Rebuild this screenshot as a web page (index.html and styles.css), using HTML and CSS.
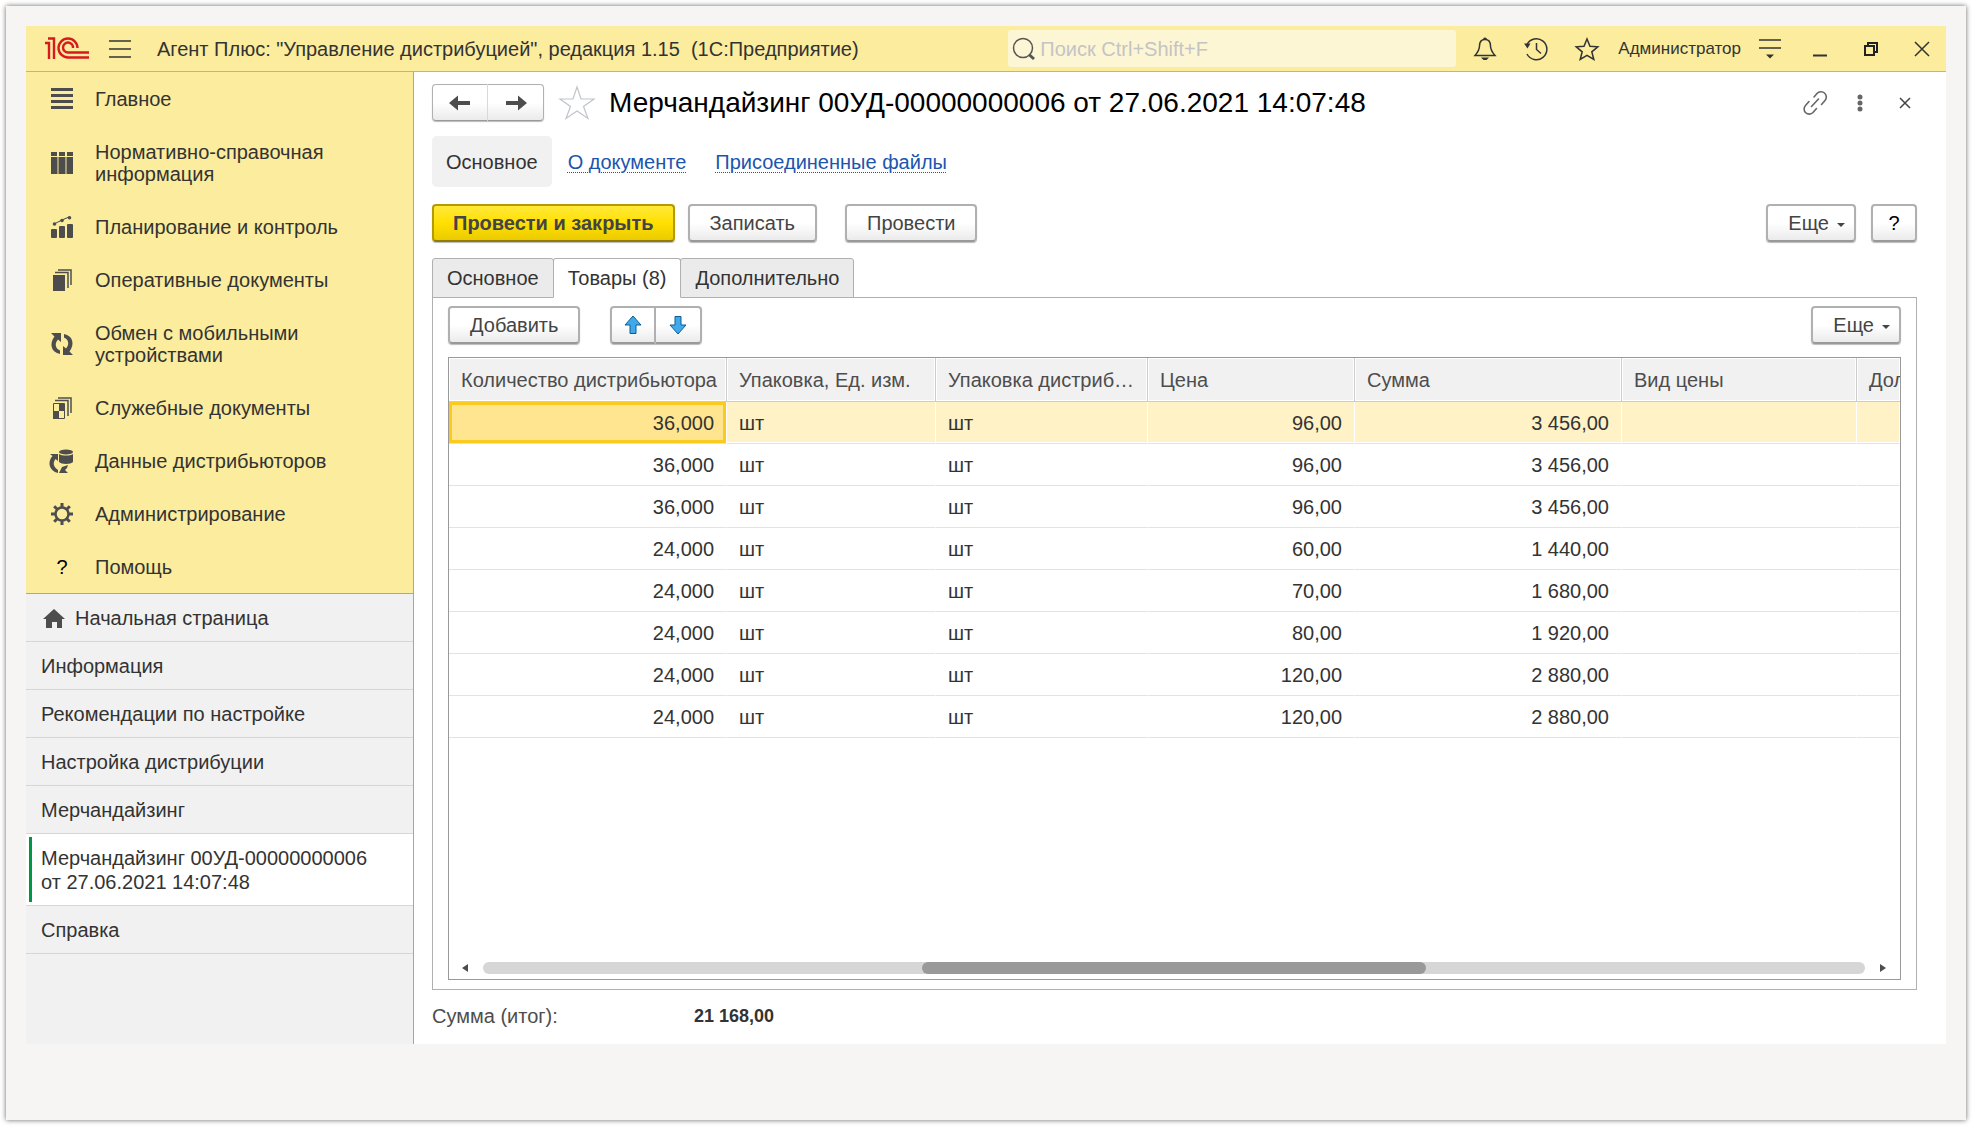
FILE: index.html
```html
<!DOCTYPE html>
<html lang="ru">
<head>
<meta charset="UTF-8">
<meta name="viewport" content="width=device-width, initial-scale=1.0">
<title>Мерчандайзинг 00УД-00000000006</title>
<link rel="stylesheet" href="styles.css">
</head>
<body>
<div class="frame">
  <div class="app">
    <header class="topbar">
      <svg class="logo" width="44" height="23" viewBox="0 0 44 23" fill="none" stroke="#d8191f" stroke-width="2.400">
        <path d="M0 6h4V22M3 1.500h6V22"/>
        <path d="M32.500 11a9.500 9.500 0 1 0-9.500 9.500H44"/>
        <path d="M28 11a5 5 0 1 0-5 4.500H44"/>
      </svg>
      <button class="icon-btn menu-btn" aria-label="Меню">
        <svg width="22" height="18" viewBox="0 0 22 18" stroke="#333" stroke-width="1.500"><path d="M0 1h22M0 9h22M0 17h22"/></svg>
      </button>
      <span class="app-title">Агент Плюс: "Управление дистрибуцией", редакция 1.15&nbsp; (1С:Предприятие)</span>
      <label class="search">
        <svg width="24" height="24" viewBox="0 0 24 24" fill="none" stroke="#555"><circle cx="11" cy="11" r="9.500" stroke-width="1.500"/><path d="M17 17.500l5 4.500" stroke-width="3"/></svg>
        <input type="text" placeholder="Поиск Ctrl+Shift+F" aria-label="Поиск">
      </label>
      <div class="top-icons">
        <button class="icon-btn bell" aria-label="Оповещения">
          <svg width="24" height="24" viewBox="0 0 24 24" fill="none" stroke="#333" stroke-width="1.500"><path d="M12 2.500c-4 0-5.500 3-5.500 6.500 0 4-1.500 6-4.500 9.500h20c-3-3.500-4.500-5.500-4.500-9.500 0-3.500-1.500-6.500-5.500-6.500z"/><path d="M10 2.500a2 2 0 0 1 4 0zM8 20.500h8l-2.500 2.500h-3z" fill="#333" stroke="none"/></svg>
        </button>
        <button class="icon-btn history" aria-label="История">
          <svg width="24" height="24" viewBox="0 0 24 24" fill="none" stroke="#333" stroke-width="1.500"><path d="M3 7.500A10.500 10.500 0 1 1 3 17M12.500 6v6.500l4.500 4"/><path d="M0 6.500h6.500l-3 5z" fill="#333" stroke="none"/></svg>
        </button>
        <button class="icon-btn fav" aria-label="Избранное">
          <svg width="24" height="24" viewBox="0 0 24 24" fill="none" stroke="#333" stroke-width="1.500"><path d="M12 2l3 7.200 7.800.600-6 5 2 7.700-6.800-4.200-6.800 4.200 2-7.700-6-5 7.800-.600z"/></svg>
        </button>
        <a class="user" href="#">Администратор</a>
        <button class="icon-btn service" aria-label="Сервис">
          <svg width="22" height="22" viewBox="0 0 22 22" stroke="#333" stroke-width="1.500"><path d="M0 2h22M0 10h22"/><path d="M7 16.500h8l-4 4z" fill="#333" stroke="none"/></svg>
        </button>
        <button class="icon-btn win" aria-label="Свернуть">
          <svg width="14" height="16" viewBox="0 0 14 16"><path d="M0 14.500h14" stroke="#333" stroke-width="2"/></svg>
        </button>
        <button class="icon-btn win" aria-label="Развернуть">
          <svg width="14" height="14" viewBox="0 0 14 14" fill="none" stroke="#222" stroke-width="2"><path d="M1 4h9v9H1zM4 4V1h9v9h-3"/></svg>
        </button>
        <button class="icon-btn win" aria-label="Закрыть">
          <svg width="16" height="16" viewBox="0 0 16 16" stroke="#333" stroke-width="1.500"><path d="M1 1l14 14M15 1L1 15"/></svg>
        </button>
      </div>
    </header>

    <div class="workspace">
      <aside class="sidebar">
        <nav class="sections">
          <a href="#">
            <svg width="22" height="22" viewBox="0 0 22 22" fill="#4d4d4d"><path d="M0 0h22v3H0zM0 6h22v3H0zM0 12h22v3H0zM0 18h22v3H0z"/></svg>
            <span>Главное</span>
          </a>
          <a href="#">
            <svg width="22" height="22" viewBox="0 0 22 22" fill="#4d4d4d"><path d="M0 0h6v4H0zM8 0h6v4H8zM16 0h6v4h-6zM0 5h6.500v17H0zM7.500 5h7v17h-7zM15.500 5H22v17h-6.500z"/></svg>
            <span>Нормативно-справочная информация</span>
          </a>
          <a href="#">
            <svg width="22" height="22" viewBox="0 0 22 22" fill="#4d4d4d"><rect y="13" width="6" height="9" rx="1"/><rect x="8" y="10" width="6" height="12" rx="1"/><rect x="16" y="8" width="6" height="14" rx="1"/><path d="M3 8l8-4 7-3" stroke="#4d4d4d"/><circle cx="3.500" cy="8" r="1.800"/><circle cx="11" cy="4.500" r="1.800"/><circle cx="18.500" cy="1.800" r="1.800"/></svg>
            <span>Планирование и контроль</span>
          </a>
          <a href="#">
            <svg width="22" height="22" viewBox="0 0 22 22" fill="#4d4d4d"><path d="M2 6h12v16H2z"/><path d="M4 3.500h13V19M7 1h13v15" fill="none" stroke="#4d4d4d" stroke-width="1.500"/></svg>
            <span>Оперативные документы</span>
          </a>
          <a href="#">
            <svg width="22" height="22" viewBox="0 0 22 22" fill="#4d4d4d"><path d="M0 0h10v9L7 6.500c-3.500 3.500-3 9 2 11V21C0 19.500-2 10.500 3.500 3.500zM22 22H12v-9l3 2.500c3.500-3.500 3-9-2-11V1c9 1.500 11 10.500 5.500 17.500z"/></svg>
            <span>Обмен с мобильными устройствами</span>
          </a>
          <a href="#">
            <svg width="22" height="22" viewBox="0 0 22 22" fill="#4d4d4d"><path d="M2.500 6.500h11v15h-11z" fill="none" stroke="#4d4d4d"/><path d="M8 7h6v7H8zM2 14h6v8H2z"/><path d="M4 3.500h13V19M7 1h13v15" fill="none" stroke="#4d4d4d" stroke-width="1.500"/></svg>
            <span>Служебные документы</span>
          </a>
          <a href="#">
            <svg width="22" height="22" viewBox="1 1 22 22" fill="#4d4d4d"><ellipse cx="16" cy="3" rx="7" ry="2.500"/><path d="M9 5c3 2 11 2 14 0v8c-2 2.500-12 2.500-14 0zM0 5h8v7L5.500 10c-3 4-2 8 2.500 11v3C-1 22 -3 13 2.500 7zM12 18l6-2-1 3-2 2 3 3h-9z"/></svg>
            <span>Данные дистрибьюторов</span>
          </a>
          <a href="#">
            <svg width="22" height="22" viewBox="0 0 22 22" fill="none" stroke="#4d4d4d"><circle cx="11" cy="11" r="6.500" stroke-width="2.500"/><path d="M11 0v4M11 18v4M0 11h4M18 11h4M3.200 3.200L6 6M16 16l2.800 2.800M18.800 3.200L16 6M6 16l-2.800 2.800" stroke-width="3"/></svg>
            <span>Администрирование</span>
          </a>
          <a href="#">
            <i class="help-mark">?</i>
            <span>Помощь</span>
          </a>
        </nav>
        <nav class="windows">
          <a href="#" class="home">
            <svg width="22" height="19" viewBox="0 0 22 19" fill="#4d4d4d"><path d="M11 0l11 10h-3v9h-5v-6H9v6H3v-9H0z"/></svg>
            Начальная страница
          </a>
          <a href="#">Информация</a>
          <a href="#">Рекомендации по настройке</a>
          <a href="#">Настройка дистрибуции</a>
          <a href="#">Мерчандайзинг</a>
          <a href="#" class="current">Мерчандайзинг 00УД-00000000006 от 27.06.2021 14:07:48</a>
          <a href="#">Справка</a>
        </nav>
      </aside>

      <main class="document">
        <div class="doc-head">
          <div class="btn-group history-nav">
            <button class="btn" aria-label="Назад">
              <svg width="22" height="16" viewBox="0 0 22 16" fill="#4d4d4d"><path d="M0 8l9-7.500V6h12v4H9v5.500z"/></svg>
            </button>
            <button class="btn" aria-label="Вперед">
              <svg width="22" height="16" viewBox="0 0 22 16" fill="#4d4d4d"><path d="M22 8l-9-7.500V6H1v4h12v5.500z"/></svg>
            </button>
          </div>
          <button class="icon-btn doc-star" aria-label="В избранное">
            <svg width="36" height="34" viewBox="0 0 36 34" fill="none" stroke="#c0c4ca" stroke-width="1.200"><path d="M18 1l4 12h13l-10.500 7.500L29 32.500 18 25 7 32.500l4.500-12L1 13h13z"/></svg>
          </button>
          <h1>Мерчандайзинг 00УД-00000000006 от 27.06.2021 14:07:48</h1>
          <div class="doc-tools">
            <button class="icon-btn" aria-label="Получить ссылку">
              <svg width="24" height="24" viewBox="0 0 24 24" fill="none" stroke="#666" stroke-width="1.600" stroke-linecap="round"><path d="M11 6l3-3.500a5 5 0 0 1 8 7l-3.500 4M6 10.500l-3.500 4a5 5 0 0 0 7.500 7l3.500-4M8.500 15.500l7-7.500"/></svg>
            </button>
            <button class="icon-btn" aria-label="Действия">
              <svg width="24" height="24" viewBox="0 0 24 24" fill="#666"><circle cx="12" cy="6" r="2.500"/><circle cx="12" cy="12" r="2.500"/><circle cx="12" cy="18" r="2.500"/></svg>
            </button>
            <button class="icon-btn" aria-label="Закрыть документ">
              <svg width="24" height="24" viewBox="0 0 24 24" stroke="#444" stroke-width="1.500"><path d="M7 7l10 10M17 7L7 17"/></svg>
            </button>
          </div>
        </div>

        <nav class="doc-links">
          <span class="active">Основное</span>
          <a href="#">О документе</a>
          <a href="#">Присоединенные файлы</a>
        </nav>

        <div class="commands">
          <button class="btn primary">Провести и закрыть</button>
          <button class="btn">Записать</button>
          <button class="btn post">Провести</button>
          <button class="btn more">Еще <i class="caret"></i></button>
          <button class="btn help">?</button>
        </div>

        <div class="tabs">
          <button>Основное</button>
          <button class="active">Товары (8)</button>
          <button>Дополнительно</button>
        </div>

        <section class="panel">
          <div class="panel-bar">
            <button class="btn">Добавить</button>
            <div class="btn-group move">
              <button class="btn" aria-label="Переместить вверх">
                <svg width="18" height="20" viewBox="0 0 18 20" fill="#3fa9ec" stroke="#0d5e92"><path d="M9 1l8 9h-5v8.500H6V10H1z"/></svg>
              </button>
              <button class="btn" aria-label="Переместить вниз">
                <svg width="18" height="20" viewBox="0 0 18 20" fill="#3fa9ec" stroke="#0d5e92"><path d="M9 19l8-9h-5V1.500H6V10H1z"/></svg>
              </button>
            </div>
            <button class="btn more">Еще <i class="caret"></i></button>
          </div>

          <div class="grid">
            <table>
              <colgroup>
                <col class="c-qty"><col class="c-unit"><col class="c-dist"><col class="c-price"><col class="c-sum"><col class="c-kind"><col>
              </colgroup>
              <thead>
                <tr><th>Количество дистрибьютора</th><th>Упаковка, Ед. изм.</th><th>Упаковка дистриб…</th><th>Цена</th><th>Сумма</th><th>Вид цены</th><th class="cut">Дол</th></tr>
              </thead>
              <tbody>
                <tr class="selected"><td class="num focus">36,000</td><td>шт</td><td>шт</td><td class="num">96,00</td><td class="num">3 456,00</td><td></td><td></td></tr>
                <tr><td class="num">36,000</td><td>шт</td><td>шт</td><td class="num">96,00</td><td class="num">3 456,00</td><td></td><td></td></tr>
                <tr><td class="num">36,000</td><td>шт</td><td>шт</td><td class="num">96,00</td><td class="num">3 456,00</td><td></td><td></td></tr>
                <tr><td class="num">24,000</td><td>шт</td><td>шт</td><td class="num">60,00</td><td class="num">1 440,00</td><td></td><td></td></tr>
                <tr><td class="num">24,000</td><td>шт</td><td>шт</td><td class="num">70,00</td><td class="num">1 680,00</td><td></td><td></td></tr>
                <tr><td class="num">24,000</td><td>шт</td><td>шт</td><td class="num">80,00</td><td class="num">1 920,00</td><td></td><td></td></tr>
                <tr><td class="num">24,000</td><td>шт</td><td>шт</td><td class="num">120,00</td><td class="num">2 880,00</td><td></td><td></td></tr>
                <tr><td class="num">24,000</td><td>шт</td><td>шт</td><td class="num">120,00</td><td class="num">2 880,00</td><td></td><td></td></tr>
              </tbody>
            </table>
            <div class="scrollbar">
              <svg width="6" height="8" viewBox="0 0 6 8" fill="#4d4d4d"><path d="M6 0v8L0 4z"/></svg>
              <div class="track"><div class="thumb"></div></div>
              <svg width="6" height="8" viewBox="0 0 6 8" fill="#4d4d4d"><path d="M0 0v8l6-4z"/></svg>
            </div>
          </div>
        </section>

        <div class="total">
          <span class="total-label">Сумма (итог):</span>
          <span class="total-value">21 168,00</span>
        </div>
      </main>
    </div>
  </div>
</div>
</body>
</html>
```
FILE: styles.css
```css
* {
  box-sizing: border-box;
}
body {
  margin: 0;
  padding: 6px;
  min-height: 100vh;
  display: flex;
  background-color: #fff;
  font-family: "Liberation Sans", Arial, sans-serif;
  font-size: 20px;
  line-height: 24px;
  color: #333;
}
a {
  color: inherit;
  text-decoration: none;
}
button {
  font: inherit;
  color: inherit;
  cursor: pointer;
}
svg {
  display: block;
  flex: none;
  overflow: visible;
}

/* paper frame round the window */
.frame {
  flex: 1;
  min-width: 0;
  display: flex;
  padding: 20px 20px 76px;
  background-color: #f6f5f3;
  box-shadow: 0 0 5px rgba(0, 0, 0, 0.6);
}
.app {
  flex: 1;
  min-width: 0;
  display: flex;
  flex-direction: column;
  background-color: #fff;
}

/* Top bar */
.topbar {
  display: flex;
  align-items: center;
  height: 46px;
  padding: 0 12px 0 19px;
  background-color: #fbec9e;
  border-bottom: 1px solid #c8b95c;
}
.icon-btn {
  display: flex;
  align-items: center;
  justify-content: center;
  padding: 0;
  border: none;
  background: none;
}
.menu-btn {
  margin: 0 26px 0 20px;
}
.app-title {
  flex: 1;
  white-space: nowrap;
}
.search {
  display: flex;
  align-items: center;
  flex: 0 1 448px;
  min-width: 0;
  height: 37px;
  padding-left: 4px;
  border-radius: 3px;
  background-color: #fdf6d5;
}
.search input {
  flex: 1;
  min-width: 0;
  padding: 0 4px;
  border: none;
  outline: none;
  background: none;
  font: inherit;
}
.search input::placeholder {
  color: #c4c4c4;
  opacity: 1;
}
.top-icons {
  display: flex;
  align-items: center;
  gap: 27px;
  margin-left: 17px;
}
.user {
  margin: 0 -9px 0 -8px;
  font-size: 17px;
}
.win {
  width: 24px;
}

.workspace {
  flex: 1;
  display: flex;
}

/* Sidebar */
.sidebar {
  flex: none;
  width: 388px;
  border-right: 1px solid #b9ab5a;
  background-color: #f1f1f1;
}
.sections {
  background-color: #fbec9e;
  border-bottom: 1px solid #b9ab5a;
  line-height: 22px;
}
.sections a {
  display: grid;
  grid-template-columns: 22px 260px;
  align-items: center;
  justify-items: center;
  gap: 22px;
  padding: 16px 0 15px 25px;
}
.sections span {
  justify-self: start;
}
.help-mark {
  font-style: normal;
  color: #000;
}
.windows a {
  display: block;
  padding: 12px 40px 11px 15px;
  border-bottom: 1px solid #d6d6d6;
}
.windows .home {
  display: flex;
  align-items: center;
  gap: 10px;
  padding-left: 17px;
}
.windows .current {
  position: relative;
  background-color: #fff;
}
.windows .current::before {
  content: "";
  position: absolute;
  left: 3px;
  top: 3px;
  bottom: 3px;
  width: 3px;
  background-color: #009646;
}

/* Document */
.document {
  flex: 1;
  min-width: 0;
  display: flex;
  flex-direction: column;
  padding: 12px 29px 16px 18px;
}
.doc-head {
  display: flex;
  align-items: center;
}
h1 {
  flex: 1;
  margin: 0;
  font-size: 28px;
  font-weight: normal;
  line-height: 37px;
  color: #000;
}
.doc-star {
  margin: 0 14px 0 15px;
}
.doc-tools {
  display: flex;
  gap: 21px;
}
.doc-links {
  display: flex;
  align-items: center;
  margin: 15px 0 17px;
}
.doc-links .active {
  padding: 14px 14px 13px;
  border-radius: 5px;
  background-color: #f1f1f1;
}
.doc-links a {
  margin-left: 16px;
  color: #1c55ae;
  text-decoration: underline dotted 1px;
  text-underline-offset: 3px;
}
.doc-links a + a {
  margin-left: 29px;
}

/* Buttons */
.btn {
  display: flex;
  align-items: center;
  justify-content: center;
  height: 38px;
  padding: 0 20px;
  border: 2px solid #b0b0b0;
  border-bottom-color: #999;
  border-radius: 4px;
  background: linear-gradient(#fff 50%, #ebebeb);
  box-shadow: 0 1px 1px #bbb;
  color: #444;
  white-space: nowrap;
}
.btn.primary {
  padding: 0 19px;
  border-color: #b39b00;
  border-bottom-color: #8f7c00;
  background: linear-gradient(#ffe93a, #ffe000 50%, #ebcb00);
  font-weight: bold;
}
.btn-group {
  display: flex;
}
.btn-group .btn:first-child {
  border-top-right-radius: 0;
  border-bottom-right-radius: 0;
}
.btn-group .btn:last-child {
  border-left: none;
  border-top-left-radius: 0;
  border-bottom-left-radius: 0;
}
.history-nav .btn {
  width: 56px;
  height: 37px;
  padding: 0;
  border-width: 1px;
}
.history-nav .btn:first-child {
  border-right-color: #ddd;
}
.move .btn {
  width: 46px;
  padding: 0;
}
.more {
  margin-left: auto;
  padding: 0 9px 0 20px;
  gap: 8px;
}
.caret {
  margin-top: 3px;
  border: 4px solid transparent;
  border-top-color: #444;
  border-bottom: none;
}
.commands {
  display: flex;
}
.commands .primary {
  margin-right: 13px;
}
.commands .post {
  margin-left: 28px;
}
.commands .help {
  width: 46px;
  margin-left: 15px;
  padding: 0;
  color: #000;
}

/* Tabs */
.tabs {
  display: flex;
  margin-top: 16px;
}
.tabs button {
  height: 40px;
  margin: 0 0 -1px -1px;
  padding: 0 14px;
  border: 1px solid #b0b0b0;
  border-radius: 3px 3px 0 0;
  background-color: #ebebeb;
}
.tabs button:first-child {
  margin-left: 0;
}
.tabs .active {
  border-bottom-color: #fff;
  background-color: #fff;
  z-index: 1;
}
.panel {
  flex: 1;
  display: flex;
  flex-direction: column;
  padding: 8px 15px 9px;
  border: 1px solid #b0b0b0;
}
.panel-bar {
  display: flex;
  margin-bottom: 13px;
}
.move {
  margin-left: 30px;
}

/* Table of goods */
.grid {
  flex: 1;
  display: flex;
  flex-direction: column;
  justify-content: space-between;
  border: 1px solid #999;
  overflow: hidden;
}
table {
  width: 100%;
  table-layout: fixed;
  border-collapse: separate;
  border-spacing: 0;
}
.c-qty {
  width: 278px;
}
.c-unit {
  width: 209px;
}
.c-dist {
  width: 212px;
}
.c-price {
  width: 207px;
}
.c-sum {
  width: 267px;
}
.c-kind {
  width: 235px;
}
th,
td {
  padding: 0 12px;
  text-align: left;
  font-weight: normal;
  white-space: nowrap;
  overflow: hidden;
}
th {
  height: 44px;
  padding-right: 2px;
  color: #4d4d4d;
  background-color: #f1f1f1;
  border-right: 1px solid #ccc;
  border-bottom: 1px solid #ccc;
  box-shadow: inset 0 0 0 1px #fff;
}
th.cut {
  padding-right: 0;
  border-right: none;
}
td {
  height: 42px;
  border-right: 1px solid transparent;
  border-bottom: 1px solid #e3e3e3;
}
.num {
  text-align: right;
}
.selected td {
  background-color: #fef2c6;
  background-clip: padding-box;
  box-shadow: inset 0 -1px #fff;
}
.selected .focus {
  background-color: #ffe58f;
  box-shadow: inset 0 0 0 3px #fbca1e;
}

.scrollbar {
  display: flex;
  align-items: center;
  gap: 15px;
  padding: 0 14px 5px 13px;
}
.track {
  flex: 1;
  height: 12px;
  border-radius: 6px;
  background-color: #d6d6d6;
}
.thumb {
  width: 36.4%;
  height: 12px;
  margin-left: 31.8%;
  border-radius: 6px;
  background-color: #999;
}

.total {
  display: flex;
  margin-top: 14px;
}
.total-label {
  width: 262px;
  color: #4d4d4d;
}
.total-value {
  font-size: 18px;
  font-weight: bold;
}
```
